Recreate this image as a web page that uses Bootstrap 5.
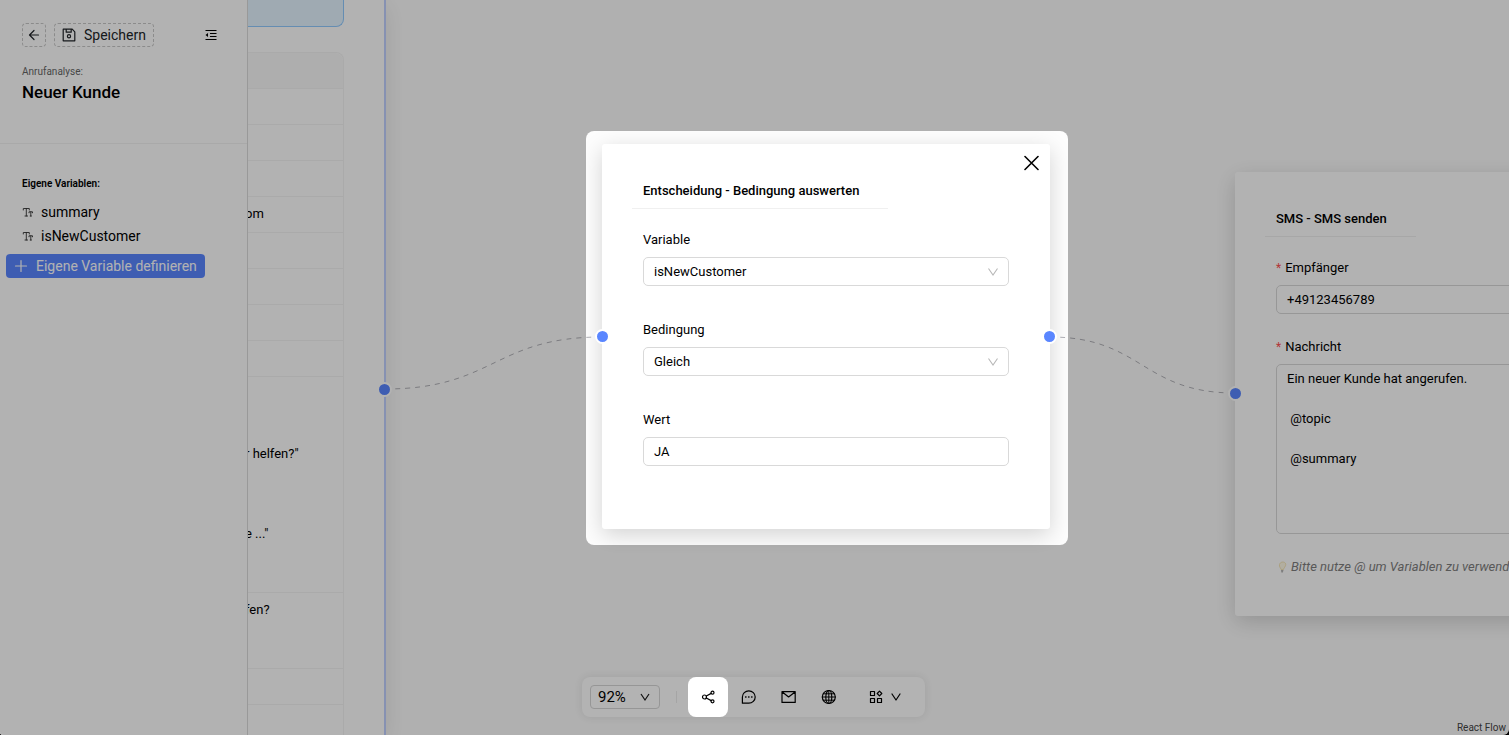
<!DOCTYPE html>
<html lang="de">
<head>
<meta charset="utf-8">
<meta name="viewport" content="width=device-width, initial-scale=1">
<title>Anrufanalyse: Neuer Kunde</title>
<link href="https://cdn.jsdelivr.net/npm/bootstrap@5.3.0/dist/css/bootstrap.min.css" rel="stylesheet">
<style>
  body { background: #000; color: #000; font: 400 13px/20px Roboto, "Liberation Sans", sans-serif; }
  button, select, input, textarea { color: inherit; }
  svg { display: block; flex: none; }
  .ico { fill: none; stroke: currentColor; stroke-width: 1.2; stroke-linecap: round; stroke-linejoin: round; }
  .app { background: #fdfdfd; border-radius: 0 0 6px 3px; }

  /* Sidebar */
  .side { width: 248px; background: #fff; border-right: 1px solid #dcdcdc; font-size: 14px; line-height: 24px; z-index: 2; }
  .side-head { padding: 23px 28px 0 22px; height: 144px; border-bottom: 1px solid #f2f2f2; }
  .btn-dash { height: 24px; padding: 0 7px; border: 1px dashed #c8c8c8; border-radius: 4px; background: #fff; font-size: 14px; line-height: 22px; }
  .btn-back { width: 24px; padding: 0 5px; }
  .tiny { font-size: 10px; line-height: 14px; }
  .flow-label { color: #666; margin-top: 18px; }
  .flow-name { font-size: 17px; line-height: 24px; font-weight: 500; margin: 1px 0 0; }
  .side-vars { padding: 33px 6px; }
  .var-list { margin: 9px 0 6px; padding: 0 16px; }
  .var-list a { color: inherit; }
  .btn-define { height: 24px; padding: 0 8px; gap: 8px; border-radius: 4px; background: #5a86ff; color: #fff; font-size: 14px; line-height: 24px; }

  /* Flow canvas */
  .node { position: absolute; background: #fff; border-radius: 3px; width: 448px; box-shadow: 0 6px 22px rgba(0,0,0,.17); padding: 37px 30px 0; }
  .node-start { left: -12px; top: 0; width: 150px; height: 100%; padding: 0; border-right: 2px solid #c0d0ff; border-radius: 0; box-shadow: 0 6px 22px rgba(0,0,0,.1); }
  .node-decision { left: 354px; top: 144px; padding-bottom: 63px; }
  .node-sms { left: 987px; top: 172px; padding-bottom: 39px; }
  .node-start .hint-box { width: 108px; height: 27px; background: #e4f4ff; border: 1px solid #91caff; border-width: 0 1px 1px 0; border-radius: 0 0 8px 0; margin-bottom: 25px; }
  .calls { width: 108px; border-collapse: separate; border-spacing: 0; border: 1px solid #f4f4f4; border-width: 1px 1px 0 0; border-radius: 0 8px 0 0; }
  .calls th, .calls td { height: 36px; padding: 7px 8px 8px 9px; border-bottom: 1px solid #f4f4f4; white-space: nowrap; vertical-align: top; }
  .calls th { background: #fafafa; border-radius: 0 8px 0 0; }
  .calls .tall { height: 76px; }
  .node-title { display: inline-block; margin: 0; padding: 0 29px 7px 11px; border-bottom: 1px solid #f0f0f0; font-size: 13px; line-height: 20px; font-weight: 500; }
  .fields { padding: 21px 11px 0; }
  .fields label { display: block; margin-bottom: 7px; }
  .fields .ctl { display: block; width: 100%; height: 29px; padding: 0 10px; border: 1px solid #d9d9d9; border-radius: 5px; color: #000; font-size: 13px; line-height: 20px; background-color: #fff; box-shadow: none; margin-bottom: 34px; }
  .fields select.ctl { background-image: url("data:image/svg+xml,%3Csvg xmlns='http://www.w3.org/2000/svg' viewBox='0 0 12 12'%3E%3Cpath d='M1.5 2.5 6 9l4.500-6.500' fill='none' stroke='%23b8b8b8' stroke-width='1.100'/%3E%3C/svg%3E"); background-size: 12px 12px; background-position: right 9px center; }
  .fields .ctl:last-child { margin-bottom: 0; }
  .node-sms .fields .ctl { margin-bottom: 23px; }
  .node-sms textarea.ctl { height: 170px; padding: 4px 10px; resize: none; }
  .req { color: #ff4d4f; font-size: 12px; line-height: 12px; margin-right: 4px; }
  .tip { color: #7f7f7f; font-style: italic; white-space: nowrap; gap: 4px; padding-left: 2px; }
  .port { position: absolute; width: 15px; height: 15px; border: 2px solid #fff; border-radius: 50%; background: #5a86ff; }
  .port-in { left: -7px; }
  .port-out { right: -7px; }
  .node-start .port { top: 382px; right: -8px; }
  .node-decision .port { top: 185px; }
  .node-sms .port { top: 214px; }
  .edges { position: absolute; inset: 0; width: 100%; height: 100%; fill: none; stroke: #b1b1b7; stroke-dasharray: 5 5; }
  .node-close { position: absolute; top: 11px; right: 11px; padding: 0; border: 0; background: none; }
  .credit { position: absolute; right: 3px; bottom: 0; font-size: 10px; line-height: 15px; color: #444; text-decoration: none; }

  /* Guided-tour dimming around the decision node */
  .spotlight { position: absolute; left: 586px; top: 131px; width: 482px; height: 414px; border-radius: 8px; box-shadow: 0 0 0 9999px rgba(0,0,0,.3); z-index: 3; pointer-events: none; }

  /* Bottom toolbar */
  .tools { position: absolute; left: 0; right: 2px; bottom: 18px; z-index: 4; pointer-events: none; }
  .tools-bar { width: 343px; height: 40px; padding-left: 8px; border-radius: 8px; background: #b3b3b3; box-shadow: 0 0 8px rgba(0,0,0,.09); pointer-events: auto; }
  .zoom-sel { width: 70px; height: 24px; padding: 0 7px; border: 1px solid #969696; border-radius: 4px; color: #000; font-size: 15px; line-height: 22px; background-color: transparent; background-image: url("data:image/svg+xml,%3Csvg xmlns='http://www.w3.org/2000/svg' viewBox='0 0 12 12'%3E%3Cpath d='M2 3l4 6 4-6' fill='none' stroke='%23111' stroke-width='1.200'/%3E%3C/svg%3E"); background-size: 12px 12px; background-position: right 8px center; }
  .tools-rule { width: 1px; height: 12px; margin: 0 11px 0 16px; background: #a5a5a5; }
  .tool { width: 40px; height: 40px; border: 0; border-radius: 8px; padding: 0; background: none; display: flex; align-items: center; justify-content: center; }
  .tool-on { background: #fff; }
  .tool-more { width: 74px; gap: 7px; }
</style>
</head>
<body>
<div class="app vh-100 d-flex position-relative overflow-hidden">
  <aside class="side flex-shrink-0">
    <div class="side-head">
      <div class="d-flex align-items-center">
        <button class="btn btn-dash btn-back me-2" type="button" aria-label="Zurück">
          <svg class="ico" width="12" height="12" viewBox="0 0 12 12"><path d="M10.500 6H1.800M6 1.500 1.500 6 6 10.500"/></svg>
        </button>
        <button class="btn btn-dash d-flex align-items-center gap-2" type="button">
          <svg class="ico" width="14" height="14" viewBox="0 0 14 14"><path d="M1.200 1.200h9l2.600 2.600v9H1.200zM4.200 1.500v2.700h5V1.500"/><circle cx="7" cy="8.300" r="1.600"/></svg>
          Speichern
        </button>
        <button class="btn p-0 border-0 ms-auto" type="button" aria-label="Menü einklappen">
          <svg width="16" height="14" viewBox="0 0 16 14"><path d="M2.500 2.500h11M7 5.500h6.500M7 8.500h6.500M2.500 11.500h11" fill="none" stroke="#000" stroke-width="1.100"/><path d="M5 5v4L2.500 7z"/></svg>
        </button>
      </div>
      <div class="tiny flow-label">Anrufanalyse:</div>
      <h1 class="flow-name">Neuer Kunde</h1>
    </div>
    <div class="side-vars">
      <div class="tiny fw-semibold px-3">Eigene Variablen:</div>
      <ul class="var-list list-unstyled">
        <li><a class="d-flex align-items-center gap-2 text-decoration-none" href="#"><svg class="ico" width="11" height="11" viewBox="0 0 11 11"><path d="M1.300 3V1.500h6V3M4.300 1.500v7.500M3 9h2.600M7 5.800V4.800H10.500v1M8.800 4.800v4.200M8.200 9h1.200" stroke="#333" stroke-width=".9"/></svg>summary</a></li>
        <li><a class="d-flex align-items-center gap-2 text-decoration-none" href="#"><svg class="ico" width="11" height="11" viewBox="0 0 11 11"><path d="M1.300 3V1.500h6V3M4.300 1.500v7.500M3 9h2.600M7 5.800V4.800H10.500v1M8.800 4.800v4.200M8.200 9h1.200" stroke="#333" stroke-width=".9"/></svg>isNewCustomer</a></li>
      </ul>
      <button class="btn btn-define border-0 d-flex align-items-center" type="button">
        <svg class="ico" width="14" height="14" viewBox="0 0 14 14"><path d="M7 1.500v11M1.500 7h11" stroke-width="1.200"/></svg>
        Eigene Variable definieren
      </button>
    </div>
  </aside>

  <main class="flex-grow-1 position-relative overflow-hidden">
    <svg class="edges"><path d="M137 389C246 389 246 337 354 337M802 337C894 337 894 393 987 393"/></svg>

    <section class="node node-start">
      <div class="hint-box"></div>
      <table class="calls">
        <thead><tr><th></th></tr></thead>
        <tbody>
          <tr><td></td></tr>
          <tr><td></td></tr>
          <tr><td></td></tr>
          <tr><td>om</td></tr>
          <tr><td></td></tr>
          <tr><td></td></tr>
          <tr><td></td></tr>
          <tr><td></td></tr>
          <tr><td><br><br><br>r helfen?"<br><br><br><br>e ..."<br><br><br></td></tr>
          <tr><td class="tall">fen?</td></tr>
          <tr><td></td></tr>
          <tr><td></td></tr>
        </tbody>
      </table>
      <span class="port port-out"></span>
    </section>

    <section class="node node-decision">
      <button class="node-close" type="button" aria-label="Schließen">
        <svg class="ico" width="16" height="16" viewBox="0 0 16 16"><path d="m2 1.500 13 13M15 1.500l-13 13" stroke-width="1.600"/></svg>
      </button>
      <h2 class="node-title">Entscheidung - Bedingung auswerten</h2>
      <div class="fields">
        <label for="var">Variable</label>
        <select id="var" class="form-select ctl"><option>isNewCustomer</option><option>summary</option></select>
        <label for="cond">Bedingung</label>
        <select id="cond" class="form-select ctl"><option>Gleich</option></select>
        <label for="val">Wert</label>
        <input id="val" class="form-control ctl" type="text" value="JA">
      </div>
      <span class="port port-in"></span>
      <span class="port port-out"></span>
    </section>

    <section class="node node-sms">
      <h2 class="node-title">SMS - SMS senden</h2>
      <div class="fields">
        <label for="to"><span class="req">*</span>Empfänger</label>
        <input id="to" class="form-control ctl" type="text" value="+49123456789">
        <label for="msg"><span class="req">*</span>Nachricht</label>
        <textarea id="msg" class="form-control ctl">Ein neuer Kunde hat angerufen.

 @topic

 @summary</textarea>
        <div class="tip d-flex align-items-center">
          <svg width="9" height="12" viewBox="0 0 9 12"><path d="M3 8.500C2.800 7 1 6 1.500 3.500 2 1 5.500.2 7.200 2 9 4.200 6 6.500 5.500 8.500z" fill="#fff9e6" stroke="#f3dfa8" stroke-width=".8"/><path d="M3 9h2.500l-.6 2.500H3.300z" fill="#b5b5b5"/></svg>
          Bitte nutze @ um Variablen zu verwenden
        </div>
      </div>
      <span class="port port-in"></span>
    </section>

    <a class="credit" href="#">React Flow</a>
  </main>

  <div class="spotlight"></div>

  <div class="tools d-flex justify-content-center">
    <div class="tools-bar d-flex align-items-center">
      <select class="form-select zoom-sel" aria-label="Zoom"><option>92%</option><option>100%</option></select>
      <span class="tools-rule"></span>
      <button class="tool tool-on" type="button" aria-label="Verzweigung">
        <svg class="ico" width="14" height="14" viewBox="0 0 14 14"><circle cx="3.500" cy="7" r="2"/><circle cx="11.500" cy="2.700" r="1.500"/><circle cx="11.500" cy="11.300" r="1.500"/><path d="m5.300 6 4.900-2.600M5.300 8l4.900 2.600"/></svg>
      </button>
      <button class="tool" type="button" aria-label="Nachricht">
        <svg class="ico" width="16" height="16" viewBox="0 0 16 16"><path d="M2.400 14.200V8A6.400 6.200 0 1 1 8.800 14.200z"/><path d="M5.600 8h.4M8.600 8h.4M11.600 8h.4" stroke-width="1.400"/></svg>
      </button>
      <button class="tool" type="button" aria-label="E-Mail">
        <svg class="ico" width="16" height="16" viewBox="0 0 16 16"><path d="M2 2.600h13.200v10.800H2zM2.300 3 8.600 8 15 3"/></svg>
      </button>
      <button class="tool" type="button" aria-label="Web">
        <svg class="ico" width="16" height="16" viewBox="0 0 16 16"><circle cx="8.800" cy="8" r="6.500"/><ellipse cx="8.800" cy="8" rx="3" ry="6.500"/><path d="M8.800 1.500v13M2.300 8h13M3.300 4.800h11M3.300 11.200h11" stroke-width="1"/></svg>
      </button>
      <button class="tool tool-more" type="button" aria-label="Weitere Bausteine">
        <svg class="ico" width="14" height="14" viewBox="0 0 14 14"><path d="M1.500 1.500H5.500v4H1.500zM1.500 8.500H5.500v4H1.500zM8.500 8.500h4v4h-4zM10.500 1.200l2.300 2.300-2.300 2.300-2.300-2.300z"/></svg>
        <svg class="ico" width="12" height="12" viewBox="0 0 12 12"><path d="m2 3 4 6 4-6" stroke-width="1.200"/></svg>
      </button>
    </div>
  </div>
</div>
<script src="https://cdn.jsdelivr.net/npm/bootstrap@5.3.0/dist/js/bootstrap.bundle.min.js"></script>
</body>
</html>
